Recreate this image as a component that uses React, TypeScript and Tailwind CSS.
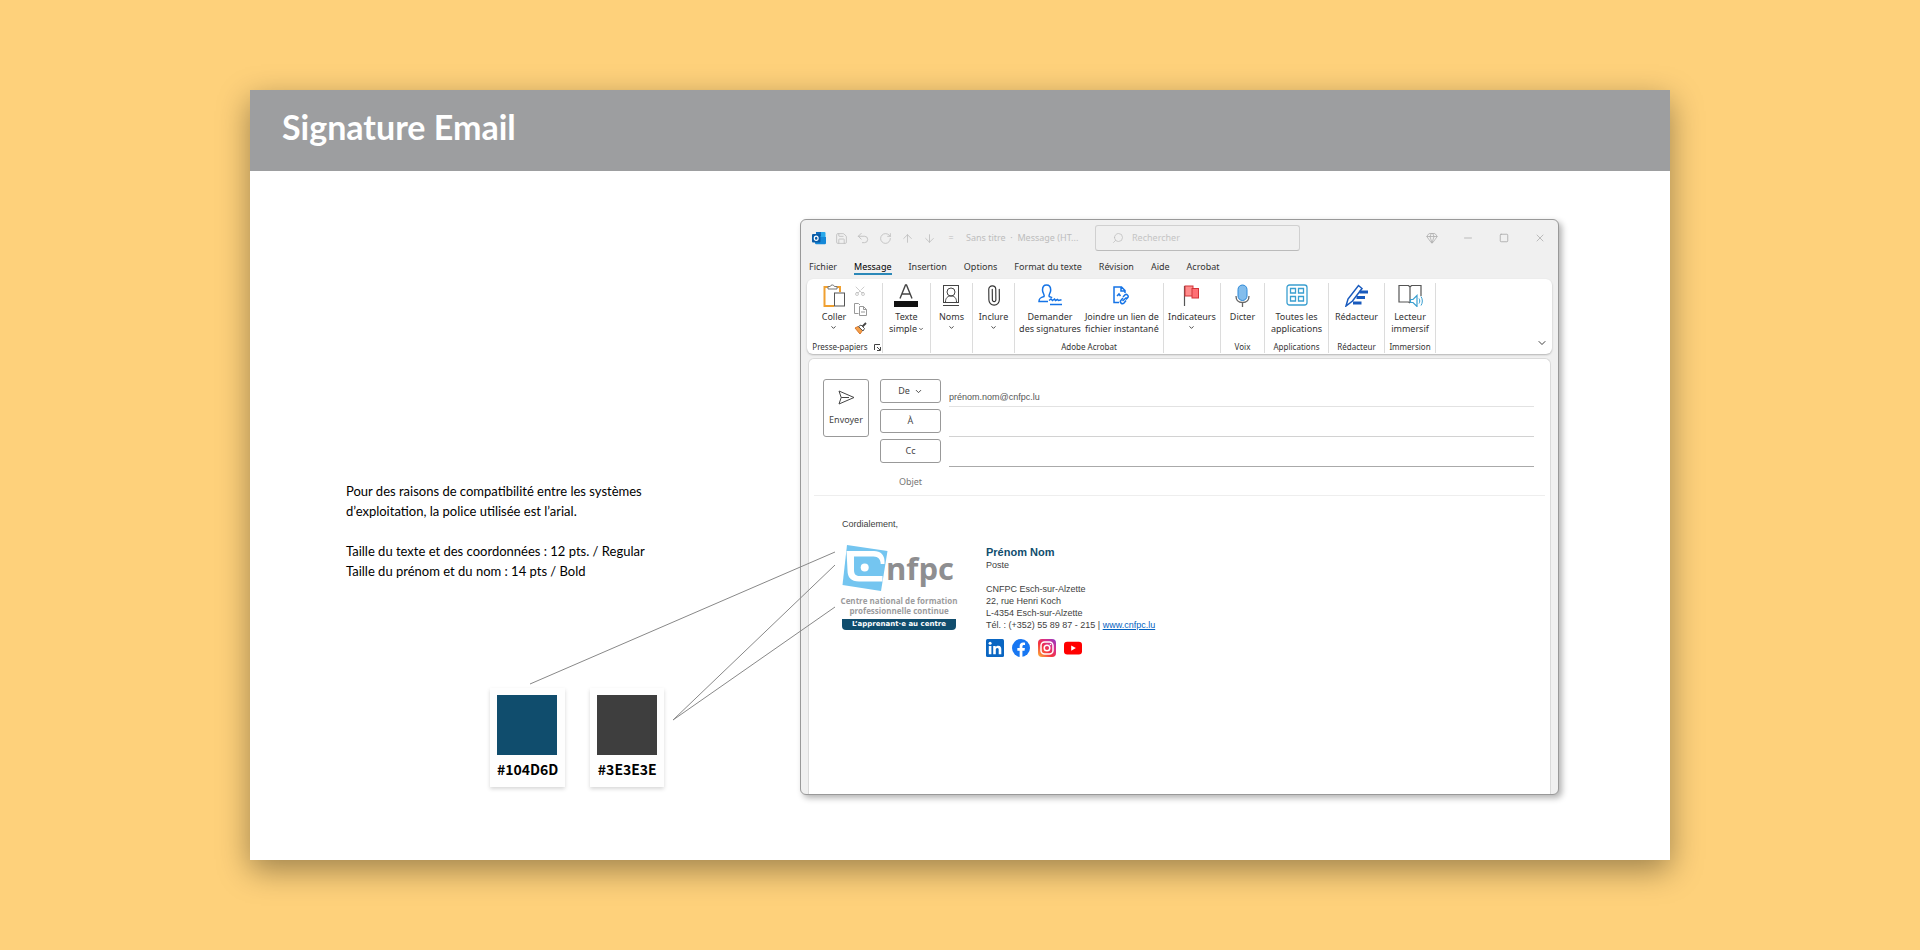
import type { ReactNode } from "react";
import { ChevronDown, Undo2, RotateCw, ArrowUp, ArrowDown, Save, Search, Gem, Minus, Square, X, Scissors, Paperclip } from "lucide-react";

const ribbonText = "text-[9px] leading-3 text-[#333]";

function Tool({ icon, lines, caret }: { icon: ReactNode; lines: string[]; caret?: "inline" | "below" }) {
  return (
    <button type="button" className={`flex flex-col items-center whitespace-nowrap ${ribbonText}`}>
      <span className="mb-1 flex h-6 items-center justify-center">{icon}</span>
      {lines.map((line, i) => (
        <span key={line} className="flex items-center gap-px">
          {line}
          {caret === "inline" && i === lines.length - 1 && <ChevronDown size={6} strokeWidth={3} />}
        </span>
      ))}
      {caret === "below" && <ChevronDown size={7} strokeWidth={3} className="mt-px" />}
    </button>
  );
}

function Group({ width, label, children }: { width: string; label?: ReactNode; children: ReactNode }) {
  return (
    <div className={`flex ${width} shrink-0 flex-col justify-between border-r border-[#dcdcdc]`}>
      <div className="flex justify-center gap-1">{children}</div>
      <div className="flex h-3 items-center justify-center whitespace-nowrap text-[8px] leading-3 text-[#333]">{label}</div>
    </div>
  );
}

function OutlookIcon() {
  return (
    <svg width="14" height="14" viewBox="0 0 14 14">
      <rect x="4" y="1" width="9.5" height="8" rx="1" fill="#28a8ea" />
      <rect x="4" y="1" width="5" height="4" fill="#0f6cbd" />
      <path d="M3 6h11v6a1.2 1.2 0 0 1-1.200 1.200H4.200A1.200 1.200 0 0 1 3 12z" fill="#1488d8" />
      <rect x="0" y="3" width="8.500" height="8.500" rx="1" fill="#0a5ca8" />
      <ellipse cx="4.200" cy="7.200" rx="1.900" ry="2.100" fill="none" stroke="#fff" strokeWidth="1.200" />
    </svg>
  );
}

function PasteIcon() {
  return (
    <svg width="22" height="24" viewBox="0 0 22 24" fill="none">
      <path d="M5 4H1.500v19H11M13 4h4v5" stroke="#f0a030" strokeWidth="2" />
      <path d="M5 6V3.500h2.200a2.200 2.200 0 0 1 4.200 0H14V6z" fill="#fff" stroke="#777" />
      <rect x="11.500" y="10" width="10" height="13" fill="#fff" stroke="#555" />
    </svg>
  );
}

function CopyIcon() {
  return (
    <svg width="13" height="13" viewBox="0 0 13 13" fill="none" stroke="#999">
      <path d="M4.500 10.500h-4V.5h4l1.500 1.500" />
      <path d="M5.500 3.500h4l3 3v6h-7zM9.500 3.500v3h3M7 9h4" />
    </svg>
  );
}

function BrushIcon() {
  return (
    <svg width="13" height="13" viewBox="0 0 13 13">
      <path d="M1 6l3-1.500 4.500 4L6 12z" fill="#f4a04a" stroke="#d9782d" />
      <path d="M4.500 4.500L7 3l3.500 3.500L9 9z" fill="#fff" stroke="#555" />
      <path d="M8.500 4.500L12 1" stroke="#444" strokeWidth="1.800" />
    </svg>
  );
}

function LauncherIcon() {
  return (
    <svg width="7" height="7" viewBox="0 0 7 7" fill="none" stroke="#444">
      <path d="M.5 6V.5H6M3 3l3 3M6.500 3v3.500H3" />
    </svg>
  );
}

function FontColorIcon() {
  return (
    <svg width="24" height="23" viewBox="0 0 24 23" fill="none">
      <path d="M6 14.500L11.500 1h1L18 14.500M8.200 10h7.600" stroke="#444" strokeWidth="1.400" />
      <rect y="17" width="24" height="6" fill="#111" />
    </svg>
  );
}

function ContactIcon() {
  return (
    <svg width="16" height="21" viewBox="0 0 16 21" fill="none" stroke="#444">
      <rect x=".5" y=".5" width="15" height="17" />
      <path d="M0 20.500h16" />
      <circle cx="8" cy="7" r="4" />
      <path d="M2.500 17c0-4 2-6 5.500-6s5.500 2 5.500 6" />
    </svg>
  );
}

function SignIcon() {
  return (
    <svg width="24" height="22" viewBox="0 0 24 22" fill="none" stroke="#1473e6" strokeWidth="1.500">
      <path d="M10 17.500H1c0-3 1-4 5-5 1-2-1.500-3-1.500-6.500C4.500 3 6 1 8.500 1s4.200 2 4.200 5c0 3.500-2.500 4.500-1.500 6.500 1 .5 2 .7 3 1.200" />
      <path d="M12 20.500h12M11 16.500l2-1.500 1.500 1.500 2-1.500 1 1.500 2-1 1 1 3-.8" />
    </svg>
  );
}

function LinkFileIcon() {
  return (
    <svg width="17" height="19" viewBox="0 0 17 19" fill="none" stroke="#1473e6" strokeWidth="1.500">
      <path d="M6 16.500H1V1h7.500L12 4.500V7M8 1v4h4M4 10l2-2 1.500 2" />
      <path d="M10 11l1.800-2a2 2 0 0 1 3 2.600L13 13.500M13.500 11.500L9.500 15M13 14.500l-2 2.500a2 2 0 0 1-3-2.800L10 12" />
    </svg>
  );
}

function FlagIcon() {
  return (
    <svg width="17" height="21" viewBox="0 0 17 21">
      <path d="M1.500 1v20" stroke="#555" strokeWidth="1.200" />
      <rect x="2" y="1" width="8" height="10" fill="#ff8c8c" stroke="#d13438" />
      <rect x="9" y="3.500" width="6.500" height="9.500" fill="#ff6f74" stroke="#d13438" />
    </svg>
  );
}

function MicIcon() {
  return (
    <svg width="15" height="23" viewBox="0 0 15 23" fill="none">
      <path d="M1 12c0 4 2.500 6.500 6.500 6.500S14 16 14 12M7.500 18.500V23" stroke="#666" strokeWidth="1.300" />
      <rect x="3" y="1" width="9" height="15.500" rx="4.500" fill="#83bdec" stroke="#2b88d8" />
    </svg>
  );
}

function AppsIcon() {
  return (
    <svg width="22" height="22" viewBox="0 0 22 22" fill="none" stroke="#3a9fd0" strokeWidth="1.300">
      <rect x="1" y="1" width="20" height="20" rx="2.500" />
      <path d="M4.500 4.500h5v4.500h-5zM12.500 4.500h5v4.500h-5zM4.500 12.500h5V17h-5zM12.500 12.500h5V17h-5z" />
    </svg>
  );
}

function EditorIcon() {
  return (
    <svg width="23" height="23" viewBox="0 0 23 23" fill="none">
      <path d="M1 22l2-7L13.500 1.500l3.500 3L7.500 17z" stroke="#185abd" strokeWidth="1.500" />
      <path d="M14.500 8H23M11.500 13.500H20M8 19h8.500" stroke="#185abd" strokeWidth="3" />
    </svg>
  );
}

function ReaderIcon() {
  return (
    <svg width="25" height="23" viewBox="0 0 25 23" fill="none">
      <path d="M12 3v15M12 3l-1.500-1.500H1V18h9.500L12 19M12 3l1.500-1.500H23V12" stroke="#555" strokeWidth="1.200" />
      <path d="M12.500 15.500h2.500l4-4v11l-4-4h-2.500z" fill="#fff" stroke="#3a9fd0" strokeWidth="1.200" />
      <path d="M21 14.500c1 1.500 1 3.500 0 5M23 12.500c1.800 2.500 1.800 6.500 0 9" stroke="#3a9fd0" />
    </svg>
  );
}

function SendIcon() {
  return (
    <svg width="17" height="15" viewBox="0 0 17 15" fill="none" stroke="#444" strokeLinejoin="round">
      <path d="M1 1l15 6.500L1 14l2.200-6.500zM3.200 7.500H11" />
    </svg>
  );
}

function CnfpcLogo() {
  return (
    <div className="flex w-[114px] flex-col items-center font-['Open_Sans',sans-serif]">
      <svg width="114" height="47" viewBox="0 0 114 47" role="img" aria-label="cnfpc">
        <path d="M5 0l40.500 6L39 46 .5 40z" fill="#74c5f0" />
        <path
          d="M4.500 6H32c6.500 0 10.500 4 10.500 10v3h-3.800c0-4.500-2.500-7.500-7.200-7.500H12V25c0 4.500 2 6 6 6h22.500v5.500H17C9 36.500 5.500 32.500 5.500 25z"
          fill="#fff"
        />
        <circle cx="22.700" cy="22.500" r="4" fill="#fff" />
        <text x="44" y="35" fontSize="31" fontWeight="700" fill="#8e8e90" fontFamily="'Open Sans', sans-serif">nfpc</text>
      </svg>
      <p className="mt-1 whitespace-nowrap text-center text-[8px] font-bold leading-[10px] text-[#9c9c9e]">
        Centre national de formation
        <br />
        professionnelle continue
      </p>
      <p className="mt-[3px] w-full rounded-b bg-[#104d6d] text-center font-['DejaVu_Sans',sans-serif] text-[7px] font-bold leading-[11px] text-white">
        L’apprenant·e au centre
      </p>
    </div>
  );
}

function Socials() {
  return (
    <div className="mt-2 flex gap-2">
      <a href="#linkedin" aria-label="LinkedIn">
        <svg width="18" height="18" viewBox="0 0 18 18">
          <rect width="18" height="18" rx="1.500" fill="#0a66c2" />
          <path d="M2.800 7h2.600v8.300H2.800zM7.200 7h2.500v1.200C10.200 7.300 11.200 6.800 12.300 6.800c2.500 0 3 1.700 3 3.900v4.600h-2.600v-4.100c0-1.200 0-2.200-1.400-2.200s-1.500 1.100-1.500 2.200v4.100H7.200z" fill="#fff" />
          <circle cx="4.100" cy="4.200" r="1.500" fill="#fff" />
        </svg>
      </a>
      <a href="#facebook" aria-label="Facebook">
        <svg width="18" height="18" viewBox="0 0 24 24">
          <circle cx="12" cy="12" r="12" fill="#1877f2" />
          <path d="M16.700 15.500l.5-3.500h-3.300V9.800c0-1 .5-1.900 2-1.900h1.500V5s-1.400-.2-2.700-.2c-2.700 0-4.500 1.600-4.500 4.600V12H7.100v3.500h3.100V24h3.700v-8.500z" fill="#fff" />
        </svg>
      </a>
      <a href="#instagram" aria-label="Instagram">
        <svg width="18" height="18" viewBox="0 0 18 18" fill="none">
          <defs>
            <linearGradient id="insta" x1="0" y1="1" x2="1" y2="0">
              <stop offset="0" stopColor="#fdb83d" />
              <stop offset=".4" stopColor="#f5333f" />
              <stop offset=".7" stopColor="#d62f8c" />
              <stop offset="1" stopColor="#8a3ac8" />
            </linearGradient>
          </defs>
          <rect width="18" height="18" rx="4" fill="url(#insta)" />
          <rect x="3" y="3" width="12" height="12" rx="3.500" stroke="#fff" strokeWidth="1.500" />
          <circle cx="9" cy="9" r="2.800" stroke="#fff" strokeWidth="1.500" />
          <circle cx="12.500" cy="5.500" r=".8" fill="#fff" />
        </svg>
      </a>
      <a href="#youtube" aria-label="YouTube">
        <svg width="18" height="18" viewBox="0 0 18 18">
          <rect y="2.800" width="18" height="12.600" rx="3.200" fill="#f00" />
          <path d="M7.200 6.400v5.400L11.900 9.100z" fill="#fff" />
        </svg>
      </a>
    </div>
  );
}

function TitleBar() {
  const icons: ReactNode[] = [
    <OutlookIcon />, <Save size={13} strokeWidth={1.5} />, <Undo2 size={14} strokeWidth={1.5} />, <RotateCw size={13} strokeWidth={1.5} />,
    <ArrowUp size={13} strokeWidth={1.5} />, <ArrowDown size={13} strokeWidth={1.5} />,
  ];
  const names = ["Outlook", "Enregistrer", "Annuler", "Rétablir", "Précédent", "Suivant"];
  return (
    <div className="flex h-9 items-center pl-[7px] text-[9px] text-[#bdbdbd]">
      {icons.map((icon, i) => (
        <button key={names[i]} type="button" aria-label={names[i]} className="flex w-[22px] justify-center">{icon}</button>
      ))}
      <span className="w-[22px] text-center">=</span>
      <span className="ml-1 w-[129px] whitespace-pre">Sans titre  ·  Message (HT...</span>
      <label className="flex h-[26px] w-[205px] items-center gap-2 rounded-[3px] border border-[#d0d0d0] border-b-[#bbb] pl-4">
        <Search size={12} strokeWidth={1.5} className="-scale-x-100" />
        <input aria-label="Rechercher" placeholder="Rechercher" className="w-32 bg-transparent outline-none placeholder:text-[#c4c4c4]" />
      </label>
      <div className="ml-auto flex text-[#aaa]">
        <button type="button" aria-label="Premium" className="flex w-9 justify-center"><Gem size={12} strokeWidth={1.500} /></button>
        <button type="button" aria-label="Réduire" className="flex w-9 justify-center"><Minus size={12} strokeWidth={1.500} /></button>
        <button type="button" aria-label="Agrandir" className="flex w-9 items-center justify-center"><Square size={10} strokeWidth={2} /></button>
        <button type="button" aria-label="Fermer" className="flex w-9 justify-center"><X size={12} strokeWidth={1.500} /></button>
      </div>
    </div>
  );
}

const tabs = ["Fichier", "Message", "Insertion", "Options", "Format du texte", "Révision", "Aide", "Acrobat"];

function Ribbon() {
  return (
    <div className="mx-[6px] flex h-[75px] rounded-md bg-white pb-px pt-1 shadow-[0_1px_2px_rgba(0,0,0,0.25)]">
      <Group width="w-[76px]" label={<span className="ml-1 flex items-center gap-[6px]">Presse-papiers <LauncherIcon /></span>}>
        <Tool icon={<PasteIcon />} lines={["Coller"]} caret="below" />
        <div className="ml-1 flex flex-col gap-[6px] pt-[2px]">
          <button type="button" aria-label="Couper"><Scissors size={12} strokeWidth={1.200} className="-rotate-90 text-[#aaa]" /></button>
          <button type="button" aria-label="Copier"><CopyIcon /></button>
          <button type="button" aria-label="Reproduire la mise en forme"><BrushIcon /></button>
        </div>
      </Group>
      <Group width="w-12"><Tool icon={<FontColorIcon />} lines={["Texte", "simple"]} caret="inline" /></Group>
      <Group width="w-[42px]"><Tool icon={<ContactIcon />} lines={["Noms"]} caret="below" /></Group>
      <Group width="w-[42px]"><Tool icon={<Paperclip size={21} strokeWidth={1.300} className="-rotate-45" />} lines={["Inclure"]} caret="below" /></Group>
      <Group width="w-[149px]" label="Adobe Acrobat">
        <Tool icon={<SignIcon />} lines={["Demander", "des signatures"]} />
        <Tool icon={<LinkFileIcon />} lines={["Joindre un lien de", "fichier instantané"]} />
      </Group>
      <Group width="w-[57px]"><Tool icon={<FlagIcon />} lines={["Indicateurs"]} caret="below" /></Group>
      <Group width="w-11" label="Voix"><Tool icon={<MicIcon />} lines={["Dicter"]} /></Group>
      <Group width="w-16" label="Applications"><Tool icon={<AppsIcon />} lines={["Toutes les", "applications"]} /></Group>
      <Group width="w-14" label="Rédacteur"><Tool icon={<EditorIcon />} lines={["Rédacteur"]} /></Group>
      <Group width="w-[51px]" label="Immersion"><Tool icon={<ReaderIcon />} lines={["Lecteur", "immersif"]} /></Group>
      <button type="button" aria-label="Réduire le ruban" className="mb-1 ml-auto mr-1 self-end"><ChevronDown size={12} strokeWidth={1.500} /></button>
    </div>
  );
}

const fieldButton = "flex h-6 w-[61px] items-center justify-center gap-1 rounded-[3px] border border-[#999]";
const fieldInput = "ml-2 h-7 min-w-0 flex-1 border-b bg-transparent pt-2 font-['Liberation_Sans',Arial,sans-serif] text-[9px] text-[#555] outline-none";

function Composer() {
  return (
    <div className="mx-[7px] mt-1 flex-1 rounded-t-md border border-b-0 border-[#dadada] bg-white">
      <div className="flex pl-[14px] pr-4 pt-5 text-[9px] text-[#444]">
        <button type="button" className="mr-[11px] flex h-[58px] w-[46px] flex-col items-center justify-center gap-2 rounded-[3px] border border-[#999]">
          <SendIcon />
          Envoyer
        </button>
        <div className="flex-1">
          <div className="flex h-[30px]">
            <button type="button" className={fieldButton}>De <ChevronDown size={9} strokeWidth={2.500} /></button>
            <input aria-label="De" defaultValue="prénom.nom@cnfpc.lu" className={`${fieldInput} border-[#e2e2e2]`} />
          </div>
          <div className="flex h-[30px]">
            <button type="button" className={fieldButton}>À</button>
            <input aria-label="À" className={`${fieldInput} border-[#d2d2d2]`} />
          </div>
          <div className="flex h-[30px]">
            <button type="button" className={fieldButton}>Cc</button>
            <input aria-label="Cc" className={`${fieldInput} border-[#aaa]`} />
          </div>
          <label className="flex h-[26px] items-center text-[#777]">
            <span className="w-[61px] text-center">Objet</span>
            <input className="ml-2 min-w-0 flex-1 bg-transparent outline-none" />
          </label>
        </div>
      </div>
      <div className="mx-[5px] border-t border-[#eeeeee]" />
      <div className="px-[33px] pt-[22px] font-['Liberation_Sans',Arial,sans-serif] text-[9px] leading-3 text-[#3e3e3e]">
        <p>Cordialement,</p>
        <div className="mt-[15px] flex gap-[30px]">
          <CnfpcLogo />
          <div>
            <p className="text-[11px] font-bold leading-[14px] text-[#104d6d]">Prénom Nom</p>
            <p>Poste</p>
            <p className="mt-3">CNFPC Esch-sur-Alzette</p>
            <p>22, rue Henri Koch</p>
            <p>L-4354 Esch-sur-Alzette</p>
            <p>Tél. : (+352) 55 89 87 - 215 | <a href="#cnfpc" className="text-[#0563c1] underline">www.cnfpc.lu</a></p>
            <Socials />
          </div>
        </div>
      </div>
    </div>
  );
}

function OutlookWindow() {
  return (
    <section className="mt-12 flex min-h-[576px] w-[759px] shrink-0 flex-col overflow-hidden rounded-md border border-[#999] bg-[#f0f0f0] font-['Noto_Sans',sans-serif] shadow-[3px_3px_6px_rgba(0,0,0,0.3)]">
      <TitleBar />
      <nav className="flex h-[23px] items-center gap-[17px] pl-2 text-[9px] text-[#333]">
        {tabs.map((tab) => (
          <a key={tab} href={`#${tab}`} className={tab === "Message" ? "border-b-2 border-[#2b88b8] text-black" : "border-b-2 border-transparent"}>
            {tab}
          </a>
        ))}
      </nav>
      <Ribbon />
      <Composer />
    </section>
  );
}

function Swatch({ color, value }: { color: string; value: string }) {
  return (
    <figure className="bg-[#fefefe] px-[7px] pb-2 pt-[7px] shadow-[0_2px_4px_rgba(0,0,0,0.16)]">
      <div className={`h-[60px] w-[60px] ${color}`} />
      <figcaption className="mt-1 text-center font-['Noto_Sans_CJK_SC',sans-serif] text-[14px] font-bold leading-5 text-black">{value}</figcaption>
    </figure>
  );
}

export default function App() {
  return (
    <main className="flex min-h-screen items-center justify-center bg-[#fed17b] font-['Lato',sans-serif]">
      <article className="relative min-h-[770px] w-[1420px] bg-white shadow-[0_10px_30px_rgba(0,0,0,0.38)]">
        <header className="h-[81px] bg-[#9d9ea0] pl-8 pt-4">
          <h1 className="text-[34px] font-bold leading-[42px] text-white">Signature Email</h1>
        </header>
        <div className="flex">
          <div className="w-[550px] shrink-0 pl-24 pt-[310px]">
            <div className="text-[13px] leading-5 text-black">
              <p>Pour des raisons de compatibilité entre les systèmes<br />d’exploitation, la police utilisée est l’arial.</p>
              <p className="mt-5">Taille du texte et des coordonnées : 12 pts. / Regular<br />Taille du prénom et du nom : 14 pts / Bold</p>
            </div>
            <div className="ml-36 mt-[107px] flex gap-[25px]">
              <Swatch color="bg-[#104d6d]" value="#104D6D" />
              <Swatch color="bg-[#3e3e3e]" value="#3E3E3E" />
            </div>
          </div>
          <OutlookWindow />
        </div>
        <svg className="pointer-events-none absolute left-0 top-0" width="1420" height="770" viewBox="0 0 1420 770" fill="none" stroke="#888" strokeWidth="1" aria-hidden="true">
          <path d="M280 594L585 462M423 630L585 475M423 630L585 517" />
        </svg>
      </article>
    </main>
  );
}
